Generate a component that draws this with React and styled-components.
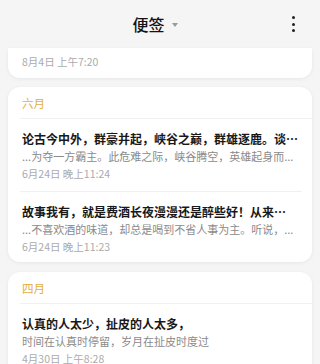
import React from "react";
import styled, { createGlobalStyle } from "styled-components";

const GlobalStyle = createGlobalStyle`
  html, body {
    margin: 0;
    padding: 0;
    background: #f5f5f5;
  }
  body {
    font-family: "Noto Sans CJK SC", "Noto Sans", sans-serif;
    -webkit-font-smoothing: antialiased;
  }
`;

const Screen = styled.div`
  width: 320px;
  height: 364px;
  overflow: hidden;
  background: #f5f5f5;
  display: flex;
  flex-direction: column;
`;

const Header = styled.header`
  height: 48px;
  flex: none;
  display: grid;
  grid-template-columns: 1fr auto 1fr;
  align-items: center;
`;

const TitleGroup = styled.div`
  grid-column: 2;
  display: flex;
  align-items: center;
  gap: 7px;
  margin-right: 10px;
`;

const Title = styled.h1`
  margin: 0;
  font-size: 16px;
  font-weight: 500;
  color: #141414;
  line-height: 22px;
`;

const Caret = styled.span`
  width: 0;
  height: 0;
  border-left: 3.5px solid transparent;
  border-right: 3.5px solid transparent;
  border-top: 4px solid #9a9a9a;
  margin-top: 1px;
`;

const MenuButton = styled.button`
  grid-column: 3;
  justify-self: end;
  margin-right: 22px;
  width: 10px;
  height: 20px;
  padding: 0;
  border: 0;
  background: transparent;
  display: flex;
  flex-direction: column;
  align-items: center;
  justify-content: center;
  gap: 3.5px;
`;

const Dot = styled.span`
  width: 3px;
  height: 3px;
  border-radius: 50%;
  background: #222;
`;

const List = styled.main`
  display: flex;
  flex-direction: column;
  gap: 9.5px;
  padding: 0 8px;
`;

const Card = styled.section`
  background: #fff;
  border-radius: ${(p) => (p.$clipped ? "0 0 12px 12px" : "12px")};
  box-shadow: 0 1px 4px rgba(0, 0, 0, 0.06);
  overflow: hidden;
`;

const MonthLabel = styled.div`
  margin-left: 12px;
  padding: 7px 2px 6px;
  font-size: 11.5px;
  line-height: 18px;
  color: #e1ae3c;
  border-bottom: 1px solid #f0f0f0;
`;

const Note = styled.article`
  margin: 0 10px 0 12px;
  padding: ${(p) => (p.$compact ? "5px 2px 7.5px" : "11px 2px 9px")};
  display: flex;
  flex-direction: column;
  & + & {
    border-top: 1px solid #f0f0f0;
  }
  &:last-child {
    padding-bottom: ${(p) => (p.$compact ? "7.5px" : "7px")};
  }
`;

const NoteTitle = styled.div`
  font-size: 12px;
  font-weight: 700;
  line-height: 18px;
  color: #181818;
  white-space: nowrap;
  overflow: hidden;
`;

const NotePreview = styled.div`
  font-size: 11px;
  line-height: 17px;
  color: #8a8a8a;
  white-space: nowrap;
  overflow: hidden;
`;

const NoteDate = styled.div`
  font-size: 10.5px;
  line-height: 17px;
  color: #ababab;
`;

const groups = [
  {
    month: "六月",
    notes: [
      {
        title: "论古今中外，群豪并起，峡谷之巅，群雄逐鹿。谈…",
        preview: "...为夺一方霸主。此危难之际，峡谷腾空，英雄起身而...",
        date: "6月24日 晚上11:24",
      },
      {
        title: "故事我有，就是费酒长夜漫漫还是醉些好！从来…",
        preview: "...不喜欢酒的味道，却总是喝到不省人事为主。听说，...",
        date: "6月24日 晚上11:23",
      },
    ],
  },
  {
    month: "四月",
    notes: [
      {
        title: "认真的人太少，扯皮的人太多，",
        preview: "时间在认真时停留，岁月在扯皮时度过",
        date: "4月30日 上午8:28",
      },
    ],
  },
];

export default function App() {
  return (
    <Screen>
      <GlobalStyle />
      <Header>
        <TitleGroup>
          <Title>便签</Title>
          <Caret />
        </TitleGroup>
        <MenuButton aria-label="更多">
          <Dot />
          <Dot />
          <Dot />
        </MenuButton>
      </Header>
      <List>
        <Card $clipped>
          <Note $compact>
            <NoteDate>8月4日 上午7:20</NoteDate>
          </Note>
        </Card>
        {groups.map((g) => (
          <Card key={g.month}>
            <MonthLabel>{g.month}</MonthLabel>
            {g.notes.map((n) => (
              <Note key={n.date}>
                <NoteTitle>{n.title}</NoteTitle>
                <NotePreview>{n.preview}</NotePreview>
                <NoteDate>{n.date}</NoteDate>
              </Note>
            ))}
          </Card>
        ))}
      </List>
    </Screen>
  );
}
